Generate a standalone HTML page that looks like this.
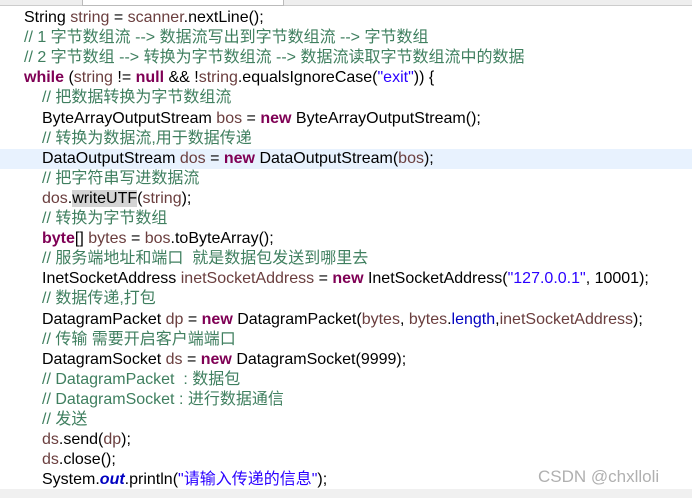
<!DOCTYPE html>
<html><head><meta charset="utf-8"><style>
body{margin:0;width:692px;height:498px;overflow:hidden;background:#fff;position:relative;font-family:"Liberation Sans","Noto Sans CJK SC",sans-serif;font-size:16px;color:#000}
.tabs{position:absolute;left:0;top:0;width:692px;height:5px;background:#eee;border-bottom:1px solid #ccc}
.tab{position:absolute;left:82px;top:0;width:200px;height:5px;background:#fff;border:1px solid #bbb;border-top:none}
.l{position:absolute;left:0;width:668px;padding-left:24px;height:20px;line-height:20px;white-space:pre}
.i{padding-left:42px;width:650px}
.c{color:#3f7f5f}.k{color:#7f0055;font-weight:bold}.v{color:#6a3e3e}.s{color:#2a00ff}.f{color:#0000c0}
.hl{background:#e8f2fe}
.bot{position:absolute;left:0;top:489px;width:692px;height:9px;background:#f0f0f0}
.wm{position:absolute;left:538px;top:467px;color:#b0b0b0;font-size:17px}
</style></head><body>
<div class="tabs"><div class="tab"></div></div>
<div class="l" style="top:8px">String <span class="v">string</span> = <span class="v">scanner</span>.nextLine();</div>
<div class="l c" style="top:28.1px">// 1 字节数组流 --&gt; 数据流写出到字节数组流 --&gt; 字节数组</div>
<div class="l c" style="top:48.2px">// 2 字节数组 --&gt; 转换为字节数组流 --&gt; 数据流读取字节数组流中的数据</div>
<div class="l" style="top:68.3px"><span class="k">while</span> (<span class="v">string</span> != <span class="k">null</span> &amp;&amp; !<span class="v">string</span>.equalsIgnoreCase(<span class="s">"exit"</span>)) {</div>
<div class="l i c" style="top:88.4px">// 把数据转换为字节数组流</div>
<div class="l i" style="top:108.5px">ByteArrayOutputStream <span class="v">bos</span> = <span class="k">new</span> ByteArrayOutputStream();</div>
<div class="l i c" style="top:128.6px">// 转换为数据流,用于数据传递</div>
<div class="l i hl" style="top:148.7px">DataOutputStream <span class="v">dos</span> = <span class="k">new</span> DataOutputStream(<span class="v">bos</span>);</div>
<div class="l i c" style="top:168.8px">// 把字符串写进数据流</div>
<div class="l i" style="top:188.9px"><span class="v">dos</span>.<span style="background:#d4d4d4">writeUTF</span>(<span class="v">string</span>);</div>
<div class="l i c" style="top:209px">// 转换为字节数组</div>
<div class="l i" style="top:229.1px"><span class="k">byte</span>[] <span class="v">bytes</span> = <span class="v">bos</span>.toByteArray();</div>
<div class="l i c" style="top:249.2px">// 服务端地址和端口  就是数据包发送到哪里去</div>
<div class="l i" style="top:269.3px">InetSocketAddress <span class="v">inetSocketAddress</span> = <span class="k">new</span> InetSocketAddress(<span class="s">"127.0.0.1"</span>, 10001);</div>
<div class="l i c" style="top:289.4px">// 数据传递,打包</div>
<div class="l i" style="top:309.5px">DatagramPacket <span class="v">dp</span> = <span class="k">new</span> DatagramPacket(<span class="v">bytes</span>, <span class="v">bytes</span>.<span class="f">length</span>,<span class="v">inetSocketAddress</span>);</div>
<div class="l i c" style="top:329.6px">// 传输 需要开启客户端端口</div>
<div class="l i" style="top:349.7px">DatagramSocket <span class="v">ds</span> = <span class="k">new</span> DatagramSocket(9999);</div>
<div class="l i c" style="top:369.8px">// DatagramPacket  : 数据包</div>
<div class="l i c" style="top:389.9px">// DatagramSocket : 进行数据通信</div>
<div class="l i c" style="top:410px">// 发送</div>
<div class="l i" style="top:430.1px"><span class="v">ds</span>.send(<span class="v">dp</span>);</div>
<div class="l i" style="top:450.2px"><span class="v">ds</span>.close();</div>
<div class="l i" style="top:470.3px">System.<span class="f" style="font-weight:bold;font-style:italic">out</span>.println(<span class="s">"请输入传递的信息"</span>);</div>
<div class="wm">CSDN @chxlloli</div>
<div class="bot"></div>
</body></html>
